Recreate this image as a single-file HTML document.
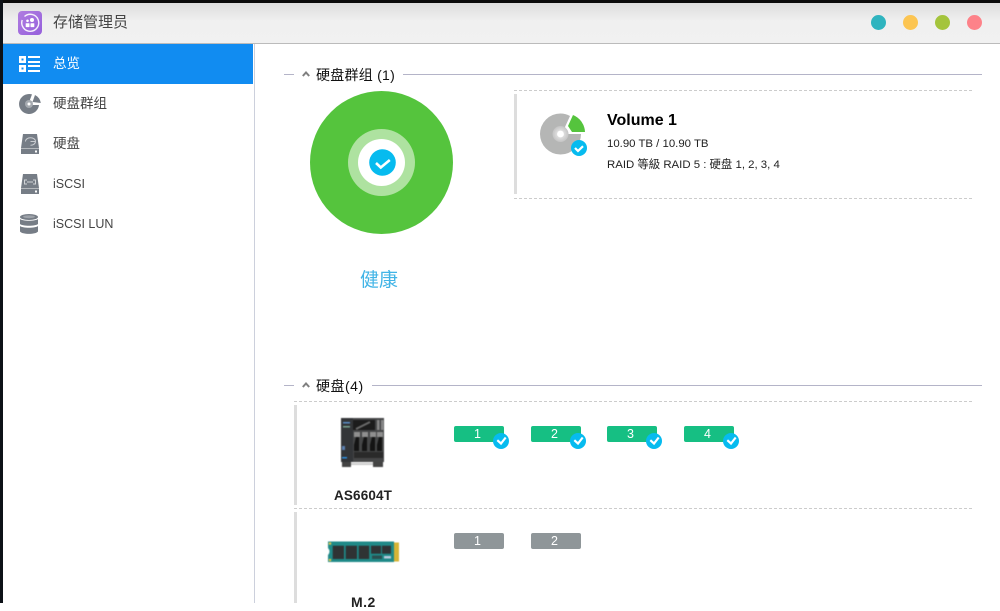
<!DOCTYPE html>
<html><head><meta charset="utf-8">
<style>
html,body{margin:0;padding:0;width:1000px;height:603px;overflow:hidden;background:#fff;font-family:"Liberation Sans","Noto Sans CJK SC",sans-serif;}
.a{position:absolute;white-space:nowrap}
.t{font-size:13.5px;color:#444;line-height:20px}
.l{font-size:12.5px;color:#444;line-height:20px}
.hr{position:absolute;height:1px;background:#b4b4c8}
.dash{position:absolute;height:0;border-top:1px dashed #ccc}
.bar{position:absolute;width:3px;background:#ddd}
.d{position:absolute;width:50px;height:16px;border-radius:2px;color:#fff;font-size:12.5px;line-height:16px;text-align:center;padding-right:3px;box-sizing:border-box}
.g{background:#16bf83}.y{background:#8f9699}
</style></head><body>
<div class="a" style="left:0;top:0;width:1000px;height:3px;background:#0a0a0a"></div>
<div class="a" style="left:0;top:0;width:3px;height:603px;background:#0d1117"></div>
<div class="a" style="left:3px;top:3px;width:997px;height:40px;background:linear-gradient(#dcdcdc,#f0f0f0 45%,#f1f1f1);border-bottom:1px solid #bbb"></div>
<svg class="a" style="left:18px;top:11px" width="24" height="24" viewBox="0 0 24 24">
<defs><linearGradient id="p" x1="0" y1="0" x2="1" y2="1"><stop offset="0" stop-color="#b07ce0"/><stop offset="1" stop-color="#9560dc"/></linearGradient></defs>
<rect width="24" height="24" rx="4" fill="url(#p)"/>
<path d="M6.500 5.500A8.500 8.500 0 1 1 4.200 9" fill="none" stroke="#fff" stroke-width="1.400" opacity=".9"/>
<circle cx="14" cy="9" r="2" fill="#fff"/><circle cx="9.500" cy="9.800" r="1.300" fill="#fff"/><rect x="7.700" y="12.300" width="3.800" height="3.800" rx=".5" fill="#fff"/><rect x="12.500" y="12.300" width="3.800" height="3.800" rx=".5" fill="#fff"/>
</svg>
<div class="a" style="left:53px;top:12px;font-size:15px;line-height:22px;color:#444">存储管理员</div>
<div class="a" style="left:871px;top:15px;width:15px;height:15px;border-radius:50%;background:#2fb4bf"></div>
<div class="a" style="left:903px;top:15px;width:15px;height:15px;border-radius:50%;background:#fcc552"></div>
<div class="a" style="left:935px;top:15px;width:15px;height:15px;border-radius:50%;background:#a4c43c"></div>
<div class="a" style="left:967px;top:15px;width:15px;height:15px;border-radius:50%;background:#fd8289"></div>

<div class="a" style="left:254px;top:44px;width:1px;height:559px;background:#ccd0dc"></div>
<div class="a" style="left:3px;top:44px;width:250px;height:40px;background:#118cf1"></div>
<svg class="a" style="left:19px;top:56px" width="21" height="16" viewBox="0 0 21 16" fill="#fff">
<path d="M0 0h7v7H0zM2.500 2.500v2h2v-2zM0 9h7v7H0zM2.500 11.500v2h2v-2z" fill-rule="evenodd"/><rect x="9" y="0" width="12" height="2"/><rect x="9" y="5" width="12" height="2"/><rect x="9" y="9" width="12" height="2"/><rect x="9" y="14" width="12" height="2"/></svg>
<div class="a t" style="left:53px;top:54px;color:#fff">总览</div>

<svg class="a" style="left:19px;top:94px" width="23" height="21" viewBox="0 0 23 21">
<path d="M10 0A10 10 0 1 0 20 11H13L10.500 7L13 .4A10 10 0 0 0 10 0Z" fill="#767d86"/><path d="M16 1A11 11 0 0 1 21.800 9L13.500 8Z" fill="#767d86"/><circle cx="10" cy="10" r="4" fill="#a6abb1"/><circle cx="10" cy="10" r="1.500" fill="#fff"/></svg>
<div class="a t" style="left:53px;top:94px">硬盘群组</div>
<svg class="a" style="left:21px;top:134px" width="18" height="20" viewBox="0 0 18 20">
<path d="M2 0H16L18 14V20H0V14Z" fill="#767d86"/><rect x="0" y="14" width="18" height=".8" fill="#c4c7ca"/><rect x="14" y="16.500" width="2" height="2" fill="#fff"/><path d="M4.500 7.500A5 3.800 0 1 1 9.500 11.300M9.500 7.500h4.500" fill="none" stroke="#c9ccd0" stroke-width="1"/></svg>
<div class="a t" style="left:53px;top:134px">硬盘</div>
<svg class="a" style="left:21px;top:174px" width="18" height="20" viewBox="0 0 18 20">
<path d="M2 0H16L18 14V20H0V14Z" fill="#767d86"/><rect x="0" y="14" width="18" height=".8" fill="#c4c7ca"/><rect x="14" y="16.500" width="2" height="2" fill="#fff"/><path d="M6 6H3.500v4H6M12 6h2.500v4H12M6 8h6" fill="none" stroke="#d0d3d6" stroke-width="1"/></svg>
<div class="a l" style="left:53px;top:174px">iSCSI</div>
<svg class="a" style="left:20px;top:214px" width="19" height="21" viewBox="0 0 19 21" fill="#767d86">
<ellipse cx="9" cy="3" rx="9" ry="3"/><ellipse cx="9" cy="2.800" rx="6" ry="1.400" fill="#9ea3aa"/><path d="M0 5C2 7.300 16 7.300 18 5V10C16 12.300 2 12.300 0 10Z"/><path d="M0 12C2 14.300 16 14.300 18 12V17.500C16 20.700 2 20.700 0 17.500Z"/></svg>
<div class="a l" style="left:53px;top:214px">iSCSI LUN</div>

<!-- section 1 -->
<div class="hr" style="left:284px;top:74px;width:10px"></div>
<svg class="a" style="left:302px;top:71px" width="8" height="6"><path d="M.8 5L4 1.500 7.200 5" fill="none" stroke="#808080" stroke-width="2"/></svg>
<div class="a" style="left:316px;top:65px;font-size:14px;line-height:20px;color:#111;letter-spacing:.25px">硬盘群组 (1)</div>
<div class="hr" style="left:403px;top:74px;width:579px"></div>

<div class="a" style="left:310px;top:91px;width:143px;height:143px;border-radius:50%;background:#55c43d"></div>
<div class="a" style="left:348px;top:129px;width:67px;height:67px;border-radius:50%;background:#aee2a0"></div>
<div class="a" style="left:358px;top:139px;width:47px;height:47px;border-radius:50%;background:#fff"></div>
<svg class="a" style="left:369px;top:149px" width="27" height="27" viewBox="0 0 27 27"><circle cx="13.500" cy="13.500" r="13.300" fill="#06bbef"/><path d="M7 14l4.800 4.500 9-7.500" fill="none" stroke="#fff" stroke-width="2.600"/></svg>
<div class="a" style="left:360px;top:267px;font-size:19px;line-height:27px;color:#41b4e6">健康</div>

<div class="dash" style="left:514px;top:90px;width:458px"></div>
<div class="bar" style="left:514px;top:94px;height:100px"></div>
<div class="dash" style="left:514px;top:198px;width:458px"></div>
<svg class="a" style="left:540px;top:113px" width="48" height="44" viewBox="0 0 48 44">
<defs><radialGradient id="c"><stop offset=".3" stop-color="#e4e4e4"/><stop offset="1" stop-color="#c4c4c4"/></radialGradient></defs>
<path d="M20.500 .5A20.500 20.500 0 1 0 41 21H28L25 14L30 3A20.500 20.500 0 0 0 20.500 .5Z" fill="#b5b6b5"/>
<circle cx="20.500" cy="21" r="8" fill="url(#c)"/><circle cx="20.500" cy="21" r="3.400" fill="#fff"/>
<path d="M33 2A19 19 0 0 1 45 19H32L28 13Z" fill="#55c43d"/>
<circle cx="39" cy="35" r="8" fill="#06bbef"/><path d="M35 35l3 3 5-4.800" fill="none" stroke="#fff" stroke-width="2.200"/></svg>
<div class="a" style="left:607px;top:111px;font-size:16px;line-height:20px;font-weight:bold;color:#000">Volume 1</div>
<div class="a" style="left:607px;top:135px;font-size:11.400px;line-height:19px;color:#222">10.90 TB / 10.90 TB</div>
<div class="a" style="left:607px;top:156px;font-size:11.400px;line-height:19px;color:#222">RAID 等級 RAID 5 : 硬盘 1, 2, 3, 4</div>

<!-- section 2 -->
<div class="hr" style="left:284px;top:385px;width:10px"></div>
<svg class="a" style="left:302px;top:382px" width="8" height="6"><path d="M.8 5L4 1.500 7.200 5" fill="none" stroke="#808080" stroke-width="2"/></svg>
<div class="a" style="left:316px;top:376px;font-size:14px;line-height:20px;color:#111;letter-spacing:.5px">硬盘(4)</div>
<div class="hr" style="left:372px;top:385px;width:610px"></div>

<div class="dash" style="left:294px;top:401px;width:678px"></div>
<div class="bar" style="left:294px;top:405px;height:100px"></div>
<div class="dash" style="left:294px;top:508px;width:678px"></div>
<div class="bar" style="left:294px;top:512px;height:91px"></div>

<svg class="a" style="left:340px;top:417px;filter:blur(.6px)" width="46" height="51" viewBox="0 0 46 51">
<rect x="1" y="1" width="43" height="44" fill="#454647"/>
<rect x="1" y="1" width="12" height="44" fill="#333538"/>
<rect x="13" y="3" width="22" height="10" fill="#1c1c1c"/><path d="M16 12L30 5" stroke="#6a6a6a" stroke-width="2"/>
<rect x="37" y="3" width="2.500" height="10" fill="#888"/><rect x="41" y="3" width="2.500" height="10" fill="#888"/>
<rect x="3" y="5" width="7" height="1.500" fill="#5b8fc9"/><rect x="3" y="9" width="7" height="1.500" fill="#7aa592"/><rect x="2" y="29" width="3" height="4" fill="#5a7fb0"/><rect x="2" y="40" width="5" height="1.500" fill="#2d8fe0"/>
<g fill="#8f8f8f"><rect x="14" y="15" width="6" height="5"/><rect x="22" y="15" width="6" height="5"/><rect x="30" y="15" width="6" height="5"/><rect x="37" y="15" width="6" height="5"/></g>
<g fill="#141414"><path d="M16 20h3v14h-5v-6z"/><path d="M24 20h3v14h-5v-6z"/><path d="M32 20h3v14h-5v-6z"/><path d="M39 20h3v14h-5v-6z"/></g>
<rect x="14" y="35" width="29" height="6" fill="#2a2a2a"/>
<rect x="2" y="45" width="9" height="5" fill="#444"/><rect x="33" y="45" width="10" height="5" fill="#444"/><rect x="11" y="46" width="22" height="2" fill="#ccc"/>
</svg>
<div class="a" style="left:334px;top:487px;font-size:13.500px;line-height:18px;font-weight:bold;color:#222;letter-spacing:.15px">AS6604T</div>

<svg class="a" style="left:327px;top:541px;filter:blur(.4px)" width="72" height="22" viewBox="0 0 72 22">
<path d="M1 .5H67V21H1V14Q4 10.500 1 7Z" fill="#1f8a88"/><rect x="67" y="1.500" width="5" height="19" fill="#d6b435"/>
<circle cx="3" cy="2.500" r="1.300" fill="#e1c64a"/><circle cx="3" cy="19" r="1.300" fill="#e1c64a"/>
<g fill="#2f3334"><rect x="5.700" y="4.700" width="11.300" height="13.300"/><rect x="18.700" y="4.700" width="11.300" height="13.300"/><rect x="31.700" y="4.700" width="10.500" height="13.300"/><rect x="44" y="4.700" width="10" height="8"/><rect x="55" y="4.700" width="9" height="8"/></g><rect x="45" y="14.500" width="10" height="3.500" fill="#2b4f50"/>
<rect x="57" y="15" width="7" height="2.500" fill="#bcd"/></svg>
<div class="a" style="left:351px;top:593px;font-size:14px;line-height:18px;font-weight:bold;color:#222;letter-spacing:.5px">M.2</div>

<div class="d g" style="left:454px;top:426px">1</div>
<div class="d g" style="left:531px;top:426px">2</div>
<div class="d g" style="left:607px;top:426px">3</div>
<div class="d g" style="left:684px;top:426px">4</div>
<svg class="a" style="left:493px;top:433px" width="16" height="16"><circle cx="8" cy="8" r="8" fill="#06bbef"/><path d="M4.300 7.200L8 10.500 12.700 4.500" fill="none" stroke="#fff" stroke-width="2.200"/></svg>
<svg class="a" style="left:570px;top:433px" width="16" height="16"><circle cx="8" cy="8" r="8" fill="#06bbef"/><path d="M4.300 7.200L8 10.500 12.700 4.500" fill="none" stroke="#fff" stroke-width="2.200"/></svg>
<svg class="a" style="left:646px;top:433px" width="16" height="16"><circle cx="8" cy="8" r="8" fill="#06bbef"/><path d="M4.300 7.200L8 10.500 12.700 4.500" fill="none" stroke="#fff" stroke-width="2.200"/></svg>
<svg class="a" style="left:723px;top:433px" width="16" height="16"><circle cx="8" cy="8" r="8" fill="#06bbef"/><path d="M4.300 7.200L8 10.500 12.700 4.500" fill="none" stroke="#fff" stroke-width="2.200"/></svg>
<div class="d y" style="left:454px;top:533px">1</div>
<div class="d y" style="left:531px;top:533px">2</div>
</body></html>
